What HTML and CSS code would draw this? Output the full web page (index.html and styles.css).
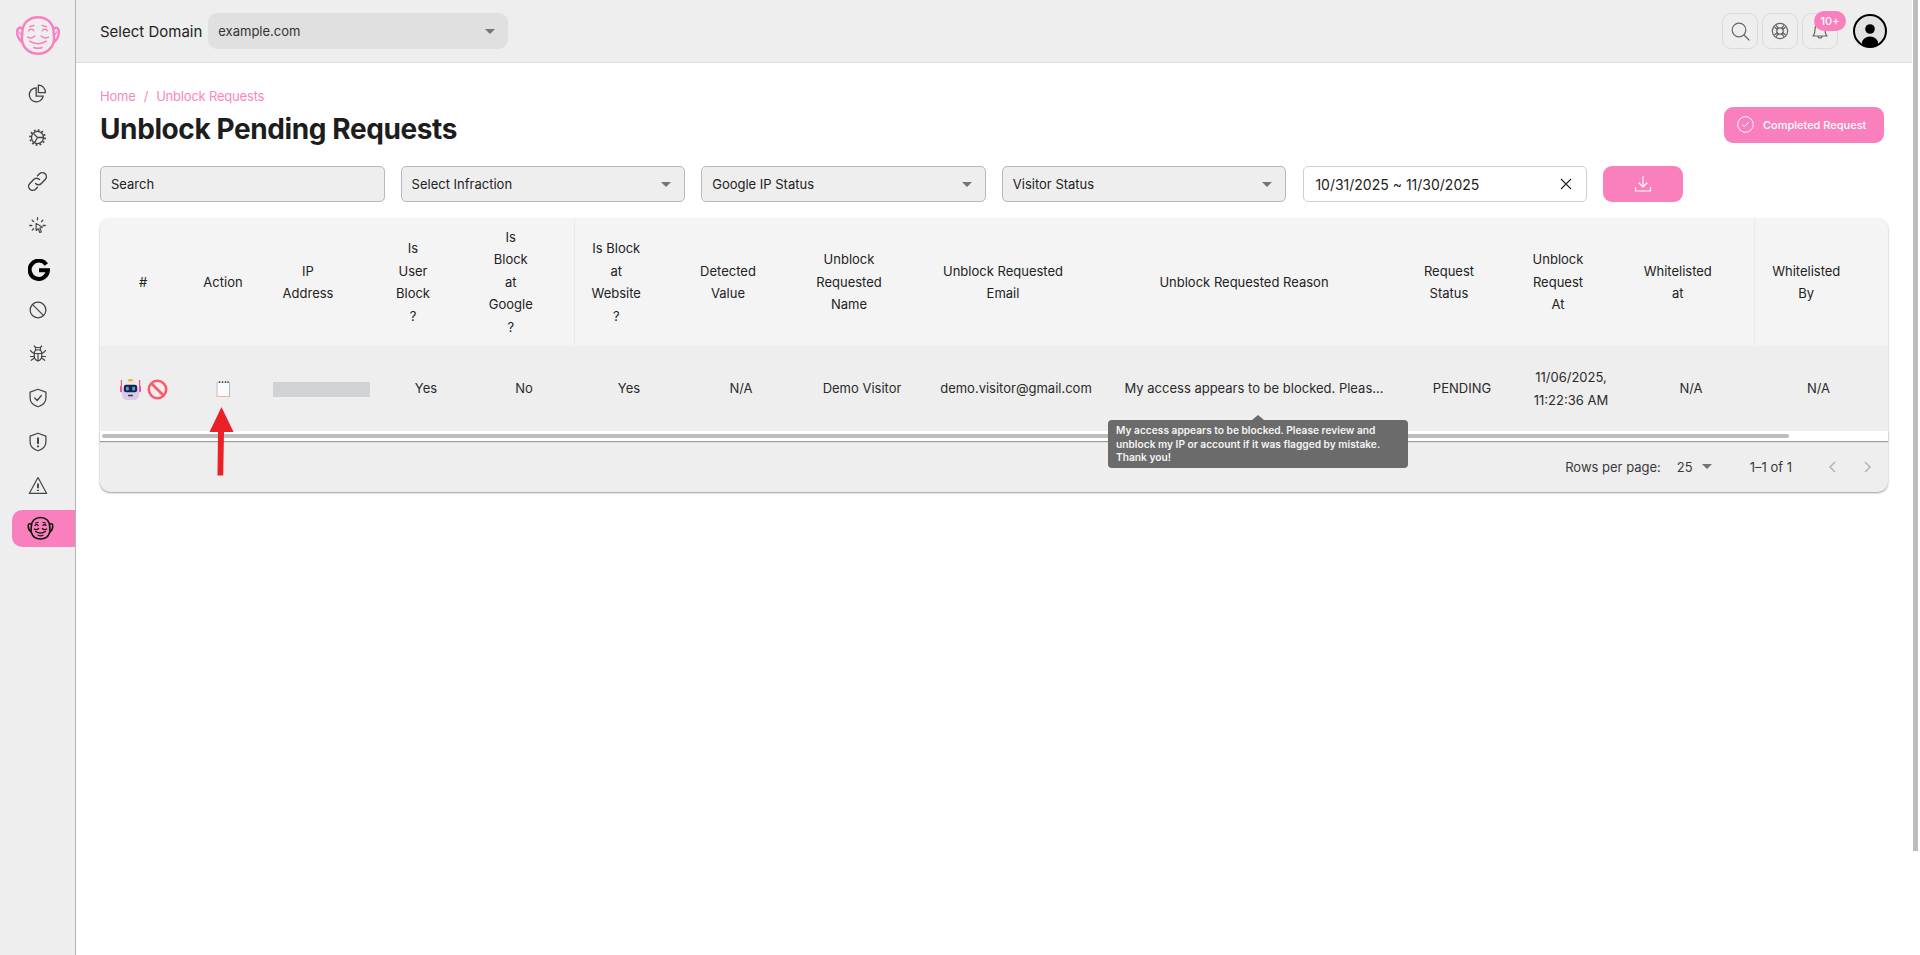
FILE: index.html
```html
<!DOCTYPE html>
<html lang="en">
<head>
<meta charset="utf-8">
<title>Unblock Pending Requests</title>
<link rel="stylesheet" href="styles.css">
</head>
<body>
<div class="app">
  <aside class="sidebar">
    <div class="logo">
      <svg width="46" height="42" viewBox="0 0 44 40" fill="none" stroke="#fb7fbf" stroke-width="2.300" stroke-linecap="round">
        <path d="M7 17C7 7 14 2 22 2s15 5 15 15c0 3 1 5 0 9-2 7-8 11-15 11S9 33 7 26c-1-4 0-6 0-9z"/>
        <path d="M7 13c-3-2-5 0-5 3 0 4 2 8 5 10M37 13c3-2 5 0 5 3 0 4-2 8-5 10"/>
        <path d="M4 16c1 2 2 3 3 4M40 16c-1 2-2 3-3 4" stroke-width="1.200"/>
        <path d="M13 15c1-2 4-2 5 0M26 15c1-2 4-2 5 0M14 11l4-1M26 10l4 1" stroke-width="1.400"/>
        <path d="M12 21c2 1 5 1 7-1M25 20c2 2 5 2 7 1M14 25c5 3 11 3 16 0" stroke-width="1.400"/>
        <path d="M18 31c2 1 6 1 8 0" stroke-width="1.400"/>
      </svg>
    </div>
    <nav class="nav">
      <a class="nav-item"><svg width="21" height="21" viewBox="0 0 24 24" fill="none" stroke="#444" stroke-width="1.500"><path d="M10.500 5.500a8 8 0 1 0 8 9.500h-8z"/><path d="M13 2.500a8 8 0 0 1 8 8.500h-8z"/></svg></a>
      <a class="nav-item"><svg width="17" height="17" viewBox="0 0 24 24" fill="none" stroke="#444" stroke-width="1.800"><circle cx="12" cy="12" r="8.500"/><circle cx="12" cy="12" r="10.500" stroke-width="2.600" stroke-dasharray="2.500 3"/><path d="M12 12L6.500 6.500M12 12h8.500M12 12l-4 7"/></svg></a>
      <a class="nav-item"><svg width="23" height="23" viewBox="0 0 24 24" fill="none" stroke="#444" stroke-width="1.500" stroke-linecap="round"><path d="M10 14a4 4 0 0 0 6 0l4-4a4 4 0 0 0-6-6l-2 2"/><path d="M14 10a4 4 0 0 0-6 0l-4 4a4 4 0 0 0 6 6l2-2"/></svg></a>
      <a class="nav-item"><svg width="17" height="19" viewBox="0 0 24 24" fill="none" stroke="#444" stroke-width="1.800" stroke-linecap="round"><path d="M12 1v3M4.500 4.500L6.500 6.500M19.500 4.500l-2 2M1 12h3M20 12h3M4.500 18.500l2-2"/><path d="M10 9l9 5.500-3.700 1 2.200 5.500-2.300.8-2-5.200-3.200 2.400z" fill="#eee" stroke-width="1.600" stroke-linejoin="round"/></svg></a>
      <a class="nav-item is-brand"><svg width="22" height="22" viewBox="0 0 24 24" fill="none" stroke="#000" stroke-width="4.400"><path d="M20 6a10 10 0 1 0 1.800 6.200H12"/></svg></a>
      <a class="nav-item"><svg width="18" height="18" viewBox="0 0 24 24" fill="none" stroke="#444" stroke-width="1.700"><circle cx="12" cy="12" r="10.500"/><path d="M4.500 4.500l15 15"/></svg></a>
      <a class="nav-item"><svg width="18" height="19" viewBox="0 0 24 24" fill="none" stroke="#444" stroke-width="1.600" stroke-linecap="round"><path d="M7 12c0-3 2-5 5-5s5 2 5 5v3c0 3-2 6-5 7-3-1-5-4-5-7zM12 12v10M7 12h10M9 7c-1-2 0-3 1-3h4c1 0 2 1 1 3"/><path d="M7 2l2 2M17 2l-2 2M2 8c1 2 3 3 5 4M22 8c-1 2-3 3-5 4M2 16h5M22 16h-5M3 21l4-3M21 21l-4-3"/></svg></a>
      <a class="nav-item"><svg width="20" height="20" viewBox="0 0 24 24" fill="none" stroke="#444" stroke-width="1.500" stroke-linecap="round" stroke-linejoin="round"><path d="M12 1.500l9.500 3.500v7c0 5-3.500 8.500-9.500 10.500C6 20.500 2.500 17 2.500 12V5z"/><path d="M8 12l3 3 5-6"/></svg></a>
      <a class="nav-item"><svg width="20" height="20" viewBox="0 0 24 24" fill="none" stroke="#444" stroke-width="1.500" stroke-linecap="round" stroke-linejoin="round"><path d="M12 1.500l9.500 3.500v7c0 5-3.500 8.500-9.500 10.500C6 20.500 2.500 17 2.500 12V5z"/><path d="M12 7.500v6M12 17v.5" stroke-width="2.400"/></svg></a>
      <a class="nav-item"><svg width="20" height="19" viewBox="0 0 24 24" fill="none" stroke="#444" stroke-width="1.500" stroke-linejoin="round"><path d="M12 2L23 22H1z"/><path d="M12 9.500v6M12 17.500v1.500" stroke-width="2.400"/></svg></a>
      <a class="nav-item is-active"><svg width="27" height="25" viewBox="0 0 44 40" fill="none" stroke="#111" stroke-width="2.600" stroke-linecap="round">
        <path d="M7 17C7 7 14 2 22 2s15 5 15 15c0 3 1 5 0 9-2 7-8 11-15 11S9 33 7 26c-1-4 0-6 0-9z"/>
        <path d="M7 13c-3-2-5 0-5 3 0 4 2 8 5 10M37 13c3-2 5 0 5 3 0 4-2 8-5 10"/>
        <path d="M13 15c1-2 4-2 5 0M26 15c1-2 4-2 5 0M14 11l4-1M26 10l4 1" stroke-width="2"/>
        <path d="M12 21c2 1 5 1 7-1M25 20c2 2 5 2 7 1M14 25c5 3 11 3 16 0M18 31c2 1 6 1 8 0" stroke-width="2"/>
      </svg></a>
    </nav>
  </aside>

  <div class="main">
    <header class="topbar">
      <div class="domain">
        <span class="domain-label">Select Domain</span>
        <div class="domain-select"><span>example.com</span><i class="caret"></i></div>
      </div>
      <div class="top-actions">
        <button class="icon-btn"><svg width="22" height="22" viewBox="0 0 22 22" fill="none" stroke="#666" stroke-width="1.200" stroke-linecap="round"><circle cx="10" cy="10" r="6.800"/><path d="M15 15l5 5"/></svg></button>
        <button class="icon-btn"><svg width="18" height="18" viewBox="0 0 20 20" fill="none" stroke="#666" stroke-width="1.400"><circle cx="10" cy="10" r="8.500"/><circle cx="10" cy="10" r="3.600"/><path d="M3.800 5.600l3.700 3M5.600 3.800l3 3.700M16.200 5.600l-3.700 3M14.400 3.800l-3 3.700M3.800 14.400l3.700-3M5.600 16.200l3-3.700M16.200 14.400l-3.700-3M14.400 16.200l-3-3.700"/></svg></button>
        <button class="icon-btn bell"><svg width="20" height="20" viewBox="0 0 20 20" fill="none" stroke="#666" stroke-width="1.200" stroke-linejoin="round"><path d="M3 15c2-2 2-4 2-7a5 5 0 0 1 10 0c0 3 0 5 2 7z"/><path d="M8 15a2 2 0 0 0 4 0"/></svg><span class="badge">10+</span></button>
        <div class="avatar"><svg width="34" height="34" viewBox="0 0 34 34"><defs><clipPath id="avatar-clip"><circle cx="17" cy="17" r="16"/></clipPath></defs><circle cx="17" cy="17" r="16" fill="#e2e2e2"/><g clip-path="url(#avatar-clip)"><circle cx="17" cy="15" r="4.800"/><ellipse cx="17" cy="29" rx="8" ry="6.500"/></g><circle cx="17" cy="17" r="16" fill="none" stroke="#000" stroke-width="2"/></svg></div>
      </div>
    </header>

    <main class="content">
      <div class="page-head">
        <div>
          <div class="crumbs"><span>Home</span><span class="crumb-sep">/</span><span>Unblock Requests</span></div>
          <h1 class="title">Unblock Pending Requests</h1>
        </div>
        <button class="done-btn"><svg width="17" height="17" viewBox="0 0 17 17" fill="none" stroke="#fff" stroke-width="1"><circle cx="8.500" cy="8.500" r="7.800"/><path d="M5.500 8.800l2 2 4-4.500"/></svg>Completed Request</button>
      </div>

      <div class="filters">
        <div class="field"><span>Search</span></div>
        <div class="field"><span>Select Infraction</span><i class="caret"></i></div>
        <div class="field"><span>Google IP Status</span><i class="caret"></i></div>
        <div class="field"><span>Visitor Status</span><i class="caret"></i></div>
        <div class="field field-date"><span>10/31/2025 ~ 11/30/2025</span><svg width="14" height="14" viewBox="0 0 14 14" stroke="#222" stroke-width="1.100"><path d="M2 2l10 10M12 2L2 12"/></svg></div>
        <button class="dl-btn"><svg width="20" height="20" viewBox="0 0 20 20" fill="none" stroke="#fff" stroke-width="1.200" stroke-linecap="round" stroke-linejoin="round"><path d="M10 2.500v10M6 9l4 4 4-4M2.500 13.500v3.500h15v-3.500"/></svg></button>
      </div>

      <section class="card">
        <table class="grid">
          <colgroup>
            <col class="c1"><col class="c2"><col class="c3"><col class="c4"><col class="c5"><col class="c6"><col class="c7"><col class="c8"><col class="c9"><col class="c10"><col class="c11"><col class="c12"><col class="c13"><col class="c14">
          </colgroup>
          <thead>
            <tr>
              <th class="th-num">#</th>
              <th class="th-plain">Action</th>
              <th>IP<br>Address</th>
              <th>Is<br>User<br>Block<br>?</th>
              <th class="sep-r col-google">Is<br>Block<br>at<br>Google<br>?</th>
              <th>Is Block<br>at<br>Website<br>?</th>
              <th>Detected<br>Value</th>
              <th>Unblock<br>Requested<br>Name</th>
              <th>Unblock Requested<br>Email</th>
              <th class="th-reason">Unblock Requested Reason</th>
              <th>Request<br>Status</th>
              <th>Unblock<br>Request<br>At</th>
              <th class="sep-r col-wl-at">Whitelisted<br>at</th>
              <th class="col-wl-by">Whitelisted<br>By</th>
            </tr>
          </thead>
          <tbody>
            <tr>
              <td class="td-icons">
                <svg width="21" height="21" viewBox="0 0 22 22"><rect x="8.500" y="0" width="5" height="3" rx="1" fill="#f6b62f"/><path d="M1.500 1v12M20.500 1v12" stroke="#f0569a" stroke-width="1.400"/><rect x="0" y="7" width="3" height="7" rx="1.200" fill="#f0569a"/><rect x="19" y="7" width="3" height="7" rx="1.200" fill="#f0569a"/><rect x="2" y="2.500" width="18" height="19.500" rx="5.500" fill="#d9cbe8"/><rect x="2" y="2.500" width="18" height="9" rx="4.500" fill="#ece8f0"/><rect x="4" y="6" width="14" height="8" rx="2.500" fill="#1f2342"/><rect x="6.200" y="8" width="3" height="4" rx="1" fill="#3ba6f0"/><rect x="12.800" y="8" width="3" height="4" rx="1" fill="#3ba6f0"/><rect x="8.500" y="16.500" width="5" height="1.600" fill="#3a3560"/></svg>
                <svg width="21" height="21" viewBox="0 0 21 21" fill="none" stroke="#fa5c6e" stroke-width="2.600"><circle cx="10.500" cy="10.500" r="8.700"/><path d="M4.500 4.500l12 12"/></svg>
              </td>
              <td><svg class="note" width="15" height="18" viewBox="0 0 15 18" fill="none"><rect x="1" y="2" width="13" height="15" fill="#fbfbfd"/><path d="M1 2v15" stroke="#bdbdc8"/><path d="M1 16.500h13" stroke="#e9b3a0"/><path d="M13.500 2v15" stroke="#9dbddd"/><path d="M1 2.500h13" stroke="#c9c9c9"/><path d="M3.500 1v2M6.500 1v2M9.500 1v2M12 1v2" stroke="#555" stroke-width="1.200"/></svg></td>
              <td><span class="redact"></span></td>
              <td>Yes</td>
              <td class="col-google">No</td>
              <td>Yes</td>
              <td>N/A</td>
              <td>Demo Visitor</td>
              <td>demo.visitor@gmail.com</td>
              <td class="reason">My access appears to be blocked. Pleas...</td>
              <td>PENDING</td>
              <td>11/06/2025,<br>11:22:36 AM</td>
              <td class="col-wl-at">N/A</td>
              <td class="col-wl-by">N/A</td>
            </tr>
          </tbody>
        </table>
        <div class="hscroll"><div class="hthumb"></div></div>
        <div class="pager">
          <span class="pager-label">Rows per page:</span>
          <span class="pager-size">25<i class="caret"></i></span>
          <span class="pager-range">1–1 of 1</span>
          <span class="pager-nav">
            <svg width="10" height="14" viewBox="0 0 10 14" fill="none" stroke="#b5b5b5" stroke-width="1.600"><path d="M8 2L3 7l5 5"/></svg>
            <svg width="10" height="14" viewBox="0 0 10 14" fill="none" stroke="#b5b5b5" stroke-width="1.600"><path d="M2 2l5 5-5 5"/></svg>
          </span>
        </div>
        <div class="tooltip">My access appears to be blocked. Please review and unblock my IP or account if it was flagged by mistake. Thank you!</div>
        <svg class="arrow" width="26" height="70" viewBox="0 0 26 70"><path d="M12.500 0L24.500 25H15L14.200 68.500H8.500L9 25H.5z" fill="#ea2127"/></svg>
      </section>
    </main>
  </div>

  <div class="vscroll"><div class="vthumb"></div></div>
</div>
</body>
</html>
```
FILE: styles.css
```css
* { box-sizing: border-box; }
html, body { margin: 0; height: 100%; }
body { font-family: Inter, "Noto Sans", sans-serif; color: #222; background: #fff; overflow: hidden; }
button { font: inherit; border: 0; padding: 0; cursor: pointer; }

.app { display: flex; height: 955px; }

.sidebar { flex: 0 0 76px; background: #eee; border-right: 1px solid #b4b4b4; }
.logo { height: 71.500px; display: flex; align-items: center; justify-content: center; }
.nav { display: flex; flex-direction: column; padding-left: 12px; }
.nav-item { height: 44px; display: flex; align-items: center; justify-content: center; padding-right: 12px; }
.nav-item.is-brand { margin-bottom: -4px; padding-right: 9px; }
.nav-item.is-active { height: 37px; margin-top: 2.500px; background: #f97fbd; border-radius: 10px 0 0 10px; padding-right: 6px; }

.main { flex: 1; min-width: 0; display: flex; flex-direction: column; }

.topbar { height: 63px; flex: none; background: #eee; border-bottom: 1px solid #ddd; display: flex; align-items: center; justify-content: space-between; padding: 0 25px 0 24px; }
.domain { display: flex; align-items: center; gap: 6px; }
.domain-label { font-size: 15px; color: #222; }
.domain-select { width: 300px; height: 36px; background: #e0e0e0; border-radius: 9px; display: flex; align-items: center; justify-content: space-between; padding: 0 13px 0 10px; font-size: 13px; color: #333; }
.caret { display: inline-block; width: 0; height: 0; border-left: 5px solid transparent; border-right: 5px solid transparent; border-top: 5px solid #757575; }

.top-actions { display: flex; align-items: center; gap: 4px; }
.icon-btn { width: 36px; height: 36px; border: 1px solid #dcdcdc; border-radius: 9px; background: transparent; display: flex; align-items: center; justify-content: center; position: relative; }
.badge { position: absolute; top: -3px; left: 11px; width: 32px; height: 20px; border-radius: 10px; background: #f97fbd; color: #fff; font-size: 11px; font-weight: 500; line-height: 20px; text-align: center; }
.avatar { width: 34px; height: 34px; margin-left: 11px; }
.avatar svg { display: block; }

.content { flex: 1; padding: 23px 24px 0; }
.page-head { height: 80px; display: flex; justify-content: space-between; align-items: flex-start; }
.crumbs { height: 20px; font-size: 13px; line-height: 20px; color: #fb86c3; display: flex; gap: 8px; letter-spacing: -.2px; }
.crumb-sep { color: #fb86c3; }
.title { margin: 3px 0 0; font-size: 28px; line-height: 40px; font-weight: 700; color: #1d1d1d; letter-spacing: -.4px; }
.done-btn { width: 160px; height: 36px; margin: 21px 4px 0 0; background: #f97fbd; border-radius: 9px; color: #fff; font-size: 11px; font-weight: 500; display: flex; align-items: center; gap: 9px; padding: 0 0 1px 13px; }

.filters { display: flex; gap: 16px; height: 36px; }
.field { width: 284.600px; height: 36px; background: #eee; border: 1px solid #b9b9b9; border-radius: 5px; display: flex; align-items: center; justify-content: space-between; padding: 0 13px 0 10px; font-size: 13px; color: #222; }
.field-date { width: 283.600px; margin-left: 1px; background: #fff; border-color: #cfcfcf; font-size: 14px; padding: 0 13px 0 11px; }
.dl-btn { width: 80px; height: 36px; border-radius: 9px; background: #f97fbd; display: flex; align-items: center; justify-content: center; }

.card { position: relative; margin-top: 16px; width: 1788px; border-radius: 10px; background: #eee; box-shadow: 0 1px 2px rgba(0,0,0,.4); }
.grid { width: 100%; table-layout: fixed; border-collapse: collapse; font-size: 13px; }
.c1 { width: 74px; } .c2 { width: 98px; } .c3 { width: 98px; } .c4 { width: 112px; } .c5 { width: 92px; }
.c6 { width: 110px; } .c7 { width: 114px; } .c8 { width: 128px; } .c9 { width: 180px; } .c10 { width: 296px; }
.c11 { width: 120px; } .c12 { width: 98px; } .c13 { width: 134px; } .c14 { width: 134px; }
.grid th { height: 128px; padding: 0 26px 0 0; background: #f4f4f4; font-weight: 400; font-size: 13px; line-height: 22.500px; text-align: center; white-space: nowrap; color: #222; }
.grid th:first-child { border-top-left-radius: 10px; }
.grid th:last-child { border-top-right-radius: 10px; }
.grid .th-num { padding: 0 0 0 12px; }
.grid .th-plain { padding: 0; }
.grid .th-reason { padding-right: 20px; }
.grid th.col-google { padding-right: 34px; }
.grid td.col-google { padding-right: 8px; }
.grid th.col-wl-at { padding: 0 26px 0 8px; }
.grid td.col-wl-at { padding-left: 8px; }
.grid th.col-wl-by { padding-right: 30px; }
.grid td.col-wl-by { padding-right: 5px; }
.grid .sep-r { border-right: 1px solid #ebebeb; }
.grid td { height: 85px; padding: 0; text-align: center; font-size: 13px; line-height: 23px; color: #2a2a2a; white-space: nowrap; }
.grid .td-icons { padding: 0 0 0 14px; }
.td-icons svg { vertical-align: middle; }
.td-icons svg + svg { margin-left: 2px; }
.note { display: inline-block; vertical-align: middle; }
.redact { display: inline-block; width: 97px; height: 15px; background: #d1d2d3; vertical-align: middle; }

.hscroll { height: 10px; background: #fff; padding: 3px 99px 3px 2px; box-shadow: 0 1px 1px rgba(0,0,0,.35); position: relative; }
.hthumb { height: 4px; background: #bdbdbd; border-radius: 2px; }
.pager { height: 51px; display: flex; align-items: center; justify-content: flex-end; padding-right: 15px; font-size: 13px; color: #3a3a3a; border-radius: 0 0 10px 10px; }
.pager-label { margin-right: 16px; }
.pager-size { display: flex; align-items: center; gap: 9px; margin-right: 38px; }
.pager-range { margin-right: 35px; }
.pager-nav { display: flex; gap: 26px; }

.tooltip { position: absolute; left: 1008px; top: 202px; width: 300px; height: 48px; padding: 4px 8px; border-radius: 4px; background: #6b6b6b; color: #f4f4f4; font-size: 10.200px; font-weight: 600; line-height: 13.500px; }
.tooltip::before { content: ""; position: absolute; left: 144px; top: -5px; border-left: 6px solid transparent; border-right: 6px solid transparent; border-bottom: 5px solid #6b6b6b; }
.arrow { position: absolute; left: 109px; top: 189px; }

.vscroll { flex: 0 0 8px; background: #fff; padding-left: 1px; padding-right: 2px; }
.vthumb { height: 851px; background: #bdbdbd; }
```
